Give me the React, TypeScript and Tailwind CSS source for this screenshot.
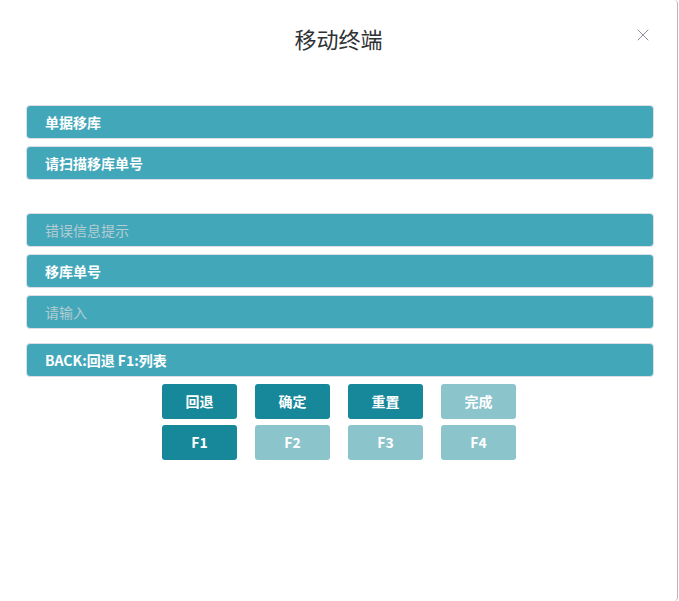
import React from "react";
import { X } from "lucide-react";

const font = { fontFamily: '"Noto Sans CJK SC", "Liberation Sans", sans-serif' };

const Field = ({ text, placeholder = false }: { text: string; placeholder?: boolean }) => (
  <div
    className={`h-[34px] w-full flex items-center px-[18px] rounded-[4px] border border-[#dcdfe6] bg-[#43a7ba] text-[14px] ${
      placeholder ? "text-[#b4ccd2]" : "text-white font-semibold"
    }`}
  >
    {text}
  </div>
);

const Btn = ({ label, active }: { label: string; active: boolean }) => (
  <button
    className={`w-[75px] h-[35px] rounded-[3px] text-white text-[14px] font-semibold flex items-center justify-center ${
      active ? "bg-[#17879a]" : "bg-[#8cc4cc]"
    }`}
  >
    {label}
  </button>
);

export default function App() {
  return (
    <div className="w-[679px] h-[601px] bg-white flex overflow-hidden" style={font}>
      <div className="w-[678px] h-[601px] bg-white rounded-[4px] border-r border-[#b8b8b8] flex flex-col">
        {/* Header */}
        <div className="relative h-[80px] flex items-center justify-center">
          <h2 className="text-[22px] text-[#303133] -mt-[4px]">移动终端</h2>
          <X className="absolute right-[24px] top-[25px] text-[#909399]" size={20} strokeWidth={1.2} />
        </div>

        {/* Body */}
        <div className="pl-[26px] pr-[23px] pt-[25px] flex flex-col">
          <div className="flex flex-col gap-[7px]">
            <Field text="单据移库" />
            <Field text="请扫描移库单号" />
          </div>
          <div className="mt-[33px] flex flex-col gap-[7px]">
            <Field text="错误信息提示" placeholder />
            <Field text="移库单号" />
            <Field text="请输入" placeholder />
          </div>
          <div className="mt-[14px]">
            <Field text="BACK:回退 F1:列表" />
          </div>
          <div className="mt-[7px] pr-[2px] flex flex-col items-center gap-[6px]">
            <div className="flex gap-[18px]">
              <Btn label="回退" active />
              <Btn label="确定" active />
              <Btn label="重置" active />
              <Btn label="完成" active={false} />
            </div>
            <div className="flex gap-[18px]">
              <Btn label="F1" active />
              <Btn label="F2" active={false} />
              <Btn label="F3" active={false} />
              <Btn label="F4" active={false} />
            </div>
          </div>
        </div>
      </div>
    </div>
  );
}
